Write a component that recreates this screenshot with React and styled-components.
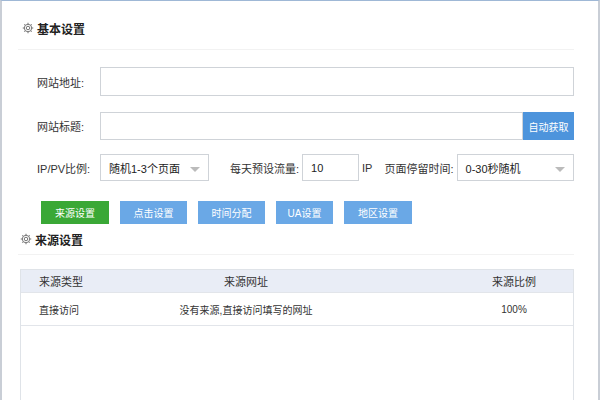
import React from 'react';
import styled, { createGlobalStyle } from 'styled-components';

const Global = createGlobalStyle`
  html, body { margin: 0; padding: 0; background: #fff; }
  body { font-family: "Liberation Sans", "Noto Sans CJK SC", sans-serif; font-size: 12px; color: #333; }
`;

const Frame = styled.div`
  width: 600px;
  height: 400px;
  box-sizing: border-box;
  border-left: 2px solid #c9ced6;
  border-right: 2px solid #c9ced6;
  border-top: 1px solid #9fb8d6;
  overflow: hidden;
  padding: 0 24px 0 16px;
`;

const SectionHead = styled.div`
  display: flex;
  align-items: center;
  gap: 3px;
  height: ${p => p.$h}px;
  padding-top: ${p => p.$pt || 0}px;
  padding-left: ${p => p.$indent}px;
  font-weight: bold;
  font-size: 12px;
  color: #222;
  border-bottom: 1px solid #f2f2f2;
`;

const Form = styled.div`
  display: flex;
  flex-direction: column;
  padding-left: 19px;
`;

const Row = styled.div`
  display: flex;
  align-items: center;
  margin-top: ${p => p.$mt}px;
  white-space: nowrap;
`;

const Label = styled.span`
  width: 63px;
  flex: none;
  font-size: 11px;
  color: #333;
`;

const Input = styled.div`
  box-sizing: border-box;
  height: ${p => p.$h || 29}px;
  width: ${p => p.$w ? p.$w + 'px' : 'auto'};
  flex: ${p => p.$w ? 'none' : '1'};
  border: 1px solid #cfd3d8;
  display: flex;
  align-items: center;
  padding: 0 8px;
  font-size: 11px;
  color: #222;
  justify-content: space-between;
`;

const Caret = styled.span`
  width: 0; height: 0;
  border-left: 5px solid transparent;
  border-right: 5px solid transparent;
  border-top: 5px solid #bbb;
  margin-top: 4px;
`;

const FetchBtn = styled.div`
  width: 51px;
  height: 28px;
  background: #4d94dc;
  color: #fff;
  display: flex;
  align-items: center;
  justify-content: center;
  font-size: 10px;
`;

const Text = styled.span`
  margin: 0 ${p => p.$mr || 0}px 0 ${p => p.$ml || 0}px;
  font-size: 11px;
`;

const Buttons = styled.div`
  display: flex;
  gap: 11px;
  margin-top: 20px;
  padding-left: 4px;
`;

const TabBtn = styled.div`
  width: ${p => p.$w}px;
  height: 23px;
  background: ${p => p.$active ? '#3aa836' : '#6aa8e6'};
  color: #fff;
  display: flex;
  align-items: center;
  justify-content: center;
  font-size: 10px;
`;

const Table = styled.div`
  margin: 14px 0 0 2px;
  border: 1px solid #dfe3e8;
  height: 200px;
`;

const TRow = styled.div`
  display: grid;
  grid-template-columns: 130px 154px 1fr 118px;
  align-items: center;
  height: ${p => p.$h}px;
  background: ${p => p.$head ? '#e9edf6' : '#fff'};
  border-bottom: 1px solid #e2e5ea;
  padding-left: 18px;
  font-size: ${p => p.$head ? 11 : 10}px;
  white-space: nowrap;
`;

const Cell = styled.span`
  text-align: ${p => p.$align || 'left'};
  overflow: visible;
  display: flex;
  justify-content: ${p => p.$align === 'center' ? 'center' : 'flex-start'};
`;

const Gear = () => (
  <svg width="12" height="12" viewBox="0 0 24 24" fill="none" stroke="#777" strokeWidth="2">
    <circle cx="12" cy="12" r="3.5" />
    <path d="M12 1.5v3M12 19.5v3M1.5 12h3M19.5 12h3M4.6 4.6l2.1 2.1M17.3 17.3l2.1 2.1M4.6 19.4l2.1-2.1M17.3 6.7l2.1-2.1" />
    <circle cx="12" cy="12" r="7.5" />
  </svg>
);

export default function App() {
  return (
    <>
      <Global />
      <Frame>
        <SectionHead $h={42} $pt={6} $indent={4}><Gear />基本设置</SectionHead>
        <Form>
          <Row $mt={17}>
            <Label>网站地址:</Label>
            <Input />
          </Row>
          <Row $mt={16}>
            <Label>网站标题:</Label>
            <Input $h={28} />
            <FetchBtn>自动获取</FetchBtn>
          </Row>
          <Row $mt={14}>
            <Label>IP/PV比例:</Label>
            <Input $w={109} $h={27}>随机1-3个页面<Caret /></Input>
            <Text $ml={21} $mr={3}>每天预设流量:</Text>
            <Input $w={57} $h={27}>10</Input>
            <Text $ml={3} $mr={12}>IP</Text>
            <Text $mr={3}>页面停留时间:</Text>
            <Input $w={117} $h={27}>0-30秒随机<Caret /></Input>
          </Row>
          <Buttons>
            <TabBtn $w={68} $active>来源设置</TabBtn>
            <TabBtn $w={67}>点击设置</TabBtn>
            <TabBtn $w={67}>时间分配</TabBtn>
            <TabBtn $w={57}>UA设置</TabBtn>
            <TabBtn $w={68}>地区设置</TabBtn>
          </Buttons>
        </Form>
        <SectionHead $h={30} $indent={2}><Gear />来源设置</SectionHead>
        <Table>
          <TRow $h={22} $head>
            <Cell>来源类型</Cell>
            <Cell $align="center">来源网址</Cell>
            <Cell />
            <Cell $align="center">来源比例</Cell>
          </TRow>
          <TRow $h={32}>
            <Cell>直接访问</Cell>
            <Cell $align="center">没有来源,直接访问填写的网址</Cell>
            <Cell />
            <Cell $align="center">100%</Cell>
          </TRow>
        </Table>
      </Frame>
    </>
  );
}
